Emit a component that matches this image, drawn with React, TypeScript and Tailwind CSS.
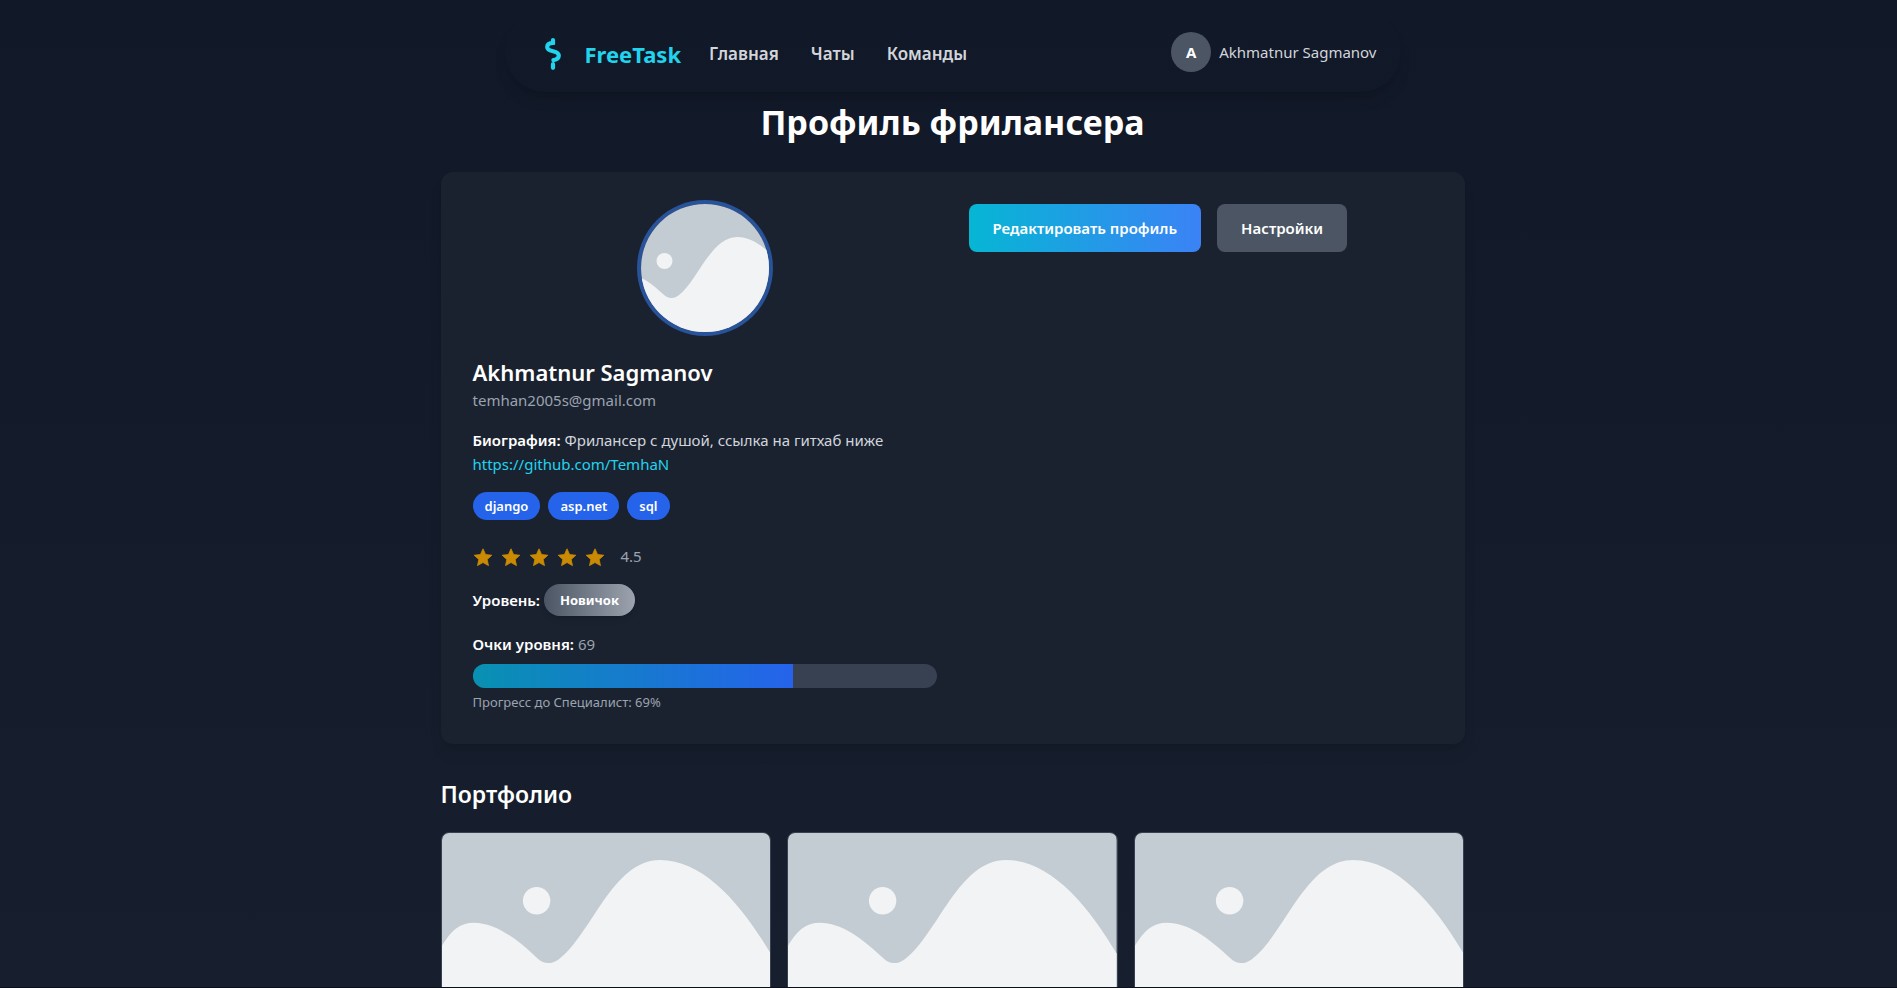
const WORKS = ["work-1", "work-2", "work-3"];
const STARS = [1, 2, 3, 4, 5];

function Landscape() {
  return (
    <svg className="block w-full" viewBox="0 0 330 248" role="img" aria-label="Работа из портфолио">
      <rect width="330" height="248" fill="#c3cbd3" />
      <circle cx="95" cy="68" r="13.8" fill="#f1f3f5" />
      <path
        d="M0 113C9 98 18 90 32 90C53 90 74 105 96 126C102 132 110 132 117 127C151 101 171 27 219 27C262 27 300 70 330 121V248H0Z"
        fill="#f1f3f5"
      />
    </svg>
  );
}

function AvatarPicture() {
  return (
    <svg className="size-32 rounded-full ring-4 ring-[#28529a]" viewBox="0 0 128 128" role="img" aria-label="Фото профиля">
      <rect width="128" height="128" fill="#c3cbd3" />
      <circle cx="23.5" cy="57" r="8" fill="#f1f3f5" />
      <path d="M0 74C9 78 15 84 22 90C27 95 33 95 38 91C55 79 70 33 96 33C108 33 117 39 128 48V128H0Z" fill="#f1f3f5" />
    </svg>
  );
}

function Star() {
  return (
    <svg className="size-5 overflow-visible text-[#ca8a04]" viewBox="0 0 20 20" fill="currentColor" stroke="currentColor" strokeLinejoin="round" aria-hidden="true">
      <path d="M10 2.8L12.59 8.54L18.84 9.23L14.18 13.46L15.47 19.62L10 16.5L4.53 19.62L5.82 13.46L1.16 9.23L7.41 8.54Z" strokeWidth="0.8" />
    </svg>
  );
}

export default function App() {
  return (
    <div className="h-screen overflow-hidden border-b border-[#0b0f1a] bg-linear-to-b from-[#111827] to-[#171f2e] pl-2 font-['Noto_Sans','Open_Sans',sans-serif] text-white">
      <header className="mx-auto mt-3 flex max-w-4xl items-center justify-between rounded-full py-5 pr-6 pl-8 shadow-lg">
        <div className="flex items-center pt-1">
          <a href="#home" className="flex items-center gap-4 text-[22px] leading-8 font-bold text-[#22d3ee]">
            <svg className="size-8" viewBox="0 0 32 32" fill="none" stroke="currentColor" strokeWidth="4.2" strokeLinecap="round" aria-hidden="true">
              <path d="M16 2.2v2.6C12 5 10.2 7 10.2 9C10.2 12 13 12.6 16 13.2C19.5 14 21.8 15 21.8 17.6C21.8 20.4 19 21.8 16.4 22.2M16 26.2v3.6" />
            </svg>
            FreeTask
          </a>
          <nav className="ml-7 flex gap-8 text-[17px] leading-7 font-semibold text-[#d1d5db]">
            <a href="#main">Главная</a>
            <a href="#chats">Чаты</a>
            <a href="#teams">Команды</a>
          </nav>
        </div>
        <a href="#profile" className="flex items-center gap-2 text-[15px] leading-6 text-[#d1d5db]">
          <span className="grid size-10 place-items-center rounded-full bg-[#4b5563] font-bold text-white">A</span>
          Akhmatnur Sagmanov
        </a>
      </header>
      <main className="mx-auto max-w-5xl">
        <h1 className="mt-2 text-center text-[34px] leading-11 font-bold">Профиль фрилансера</h1>
        <section className="mt-7 grid grid-cols-2 gap-8 rounded-xl bg-[#1a2230] p-8 shadow-lg">
          <div className="text-[15px] leading-6">
            <div className="flex justify-center">
              <AvatarPicture />
            </div>
            <h2 className="mt-6 text-[22px] leading-8 font-semibold">Akhmatnur Sagmanov</h2>
            <p className="text-[#9ca3af]">temhan2005s@gmail.com</p>
            <p className="mt-4 text-[#d1d5db]">
              <strong className="font-semibold text-white">Биография:</strong> Фрилансер с душой, ссылка на гитхаб ниже
            </p>
            <a href="https://github.com/TemhaN" className="text-[#22d3ee]">https://github.com/TemhaN</a>
            <ul className="mt-4 flex gap-2 text-[13px] leading-5 font-semibold">
              <li className="rounded-full bg-[#2563eb] px-3 py-1">django</li>
              <li className="rounded-full bg-[#2563eb] px-3 py-1">asp.net</li>
              <li className="rounded-full bg-[#2563eb] px-3 py-1">sql</li>
            </ul>
            <div className="mt-6 flex items-center gap-2">
              {STARS.map((n) => (
                <Star key={n} />
              ))}
              <span className="ml-2 text-[#9ca3af]">4.5</span>
            </div>
            <div className="mt-4 flex items-center gap-1">
              <strong className="font-semibold">Уровень:</strong>
              <span className="rounded-full bg-linear-to-r/srgb from-[#4b5563] to-[#9ca3af] px-4 py-1.5 text-[13px] leading-5 font-bold shadow-md">Новичок</span>
            </div>
            <p className="mt-4 text-[#9ca3af]">
              <strong className="font-semibold text-white">Очки уровня:</strong> 69
            </p>
            <div className="mt-2 h-6 overflow-hidden rounded-full bg-[#374151]">
              <div className="h-full w-[69%] bg-linear-to-r/srgb from-[#0891b2] to-[#2563eb]" />
            </div>
            <p className="mt-1 text-[13px] leading-5 text-[#9ca3af]">Прогресс до Специалист: 69%</p>
          </div>
          <div className="flex items-start gap-4 text-[15px] leading-6 font-semibold">
            <button className="rounded-lg bg-linear-to-r/srgb from-[#06b6d4] to-[#3b82f6] px-6 py-3">Редактировать профиль</button>
            <button className="rounded-lg bg-[#4b5563] px-6 py-3">Настройки</button>
          </div>
        </section>
        <h2 className="mt-8 text-[23px] leading-9 font-semibold">Портфолио</h2>
        <div className="mt-5 grid grid-cols-3 gap-4">
          {WORKS.map((id) => (
            <a key={id} href={`#${id}`} className="overflow-hidden rounded-lg border border-[#374151]">
              <Landscape />
            </a>
          ))}
        </div>
      </main>
    </div>
  );
}
